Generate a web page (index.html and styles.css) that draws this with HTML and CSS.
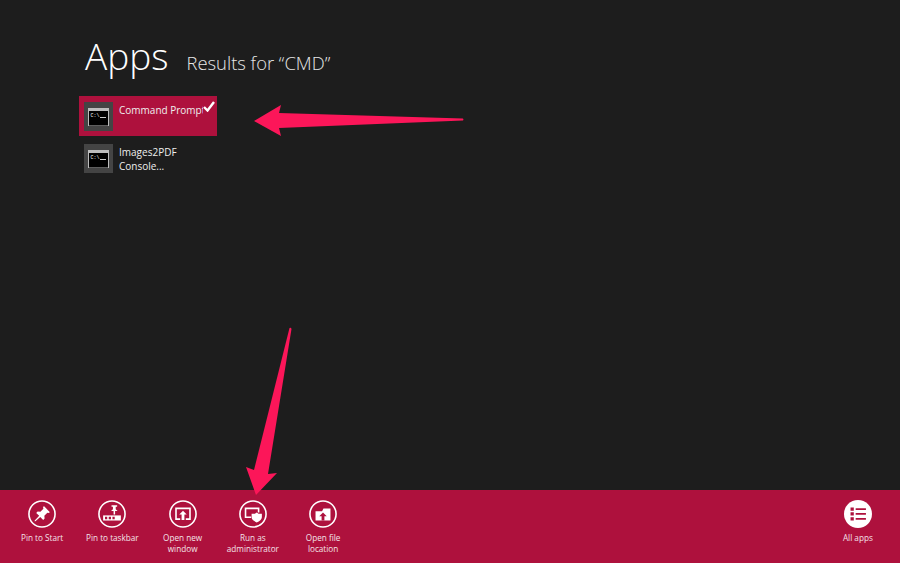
FILE: index.html
```html
<!DOCTYPE html>
<html lang="en">
<head>
<meta charset="utf-8">
<title>Apps</title>
<link rel="stylesheet" href="styles.css">
</head>
<body>
<div class="screen">
  <main class="results">
    <header class="heading">
      <h1 class="title">Apps</h1>
      <p class="subtitle">Results for “CMD”</p>
    </header>
    <ul class="app-list">
      <li class="app app-selected">
        <span class="app-icon"><svg class="term" viewBox="0 0 21 18"><rect width="21" height="18" fill="#bdbdbd"/><rect x="1" y="3" width="19" height="14.500" fill="#000"/><text x="2.500" y="9" class="term-text">C:\</text><rect x="12" y="9" width="6" height="1" fill="#ccc"/></svg></span>
        <span class="app-name">Command Prompt</span>
        <svg class="check" viewBox="0 0 12 11"><path d="M1 6l3.500 3.500L11 1" fill="none" stroke="#fff" stroke-width="2.400"/></svg>
      </li>
      <li class="app">
        <span class="app-icon"><svg class="term" viewBox="0 0 21 18"><rect width="21" height="18" fill="#bdbdbd"/><rect x="1" y="3" width="19" height="14.500" fill="#000"/><text x="2.500" y="9" class="term-text">C:\</text><rect x="12" y="9" width="6" height="1" fill="#ccc"/></svg></span>
        <span class="app-name">Images2PDF<br>Console...</span>
      </li>
    </ul>
  </main>
  <footer class="appbar">
    <div class="commands">
      <div class="cmd">
        <svg class="cmd-icon" viewBox="0 0 30 30"><circle cx="15" cy="15" r="14" fill="none" stroke="#fff" stroke-width="1.700"/><path d="M17 6.500l6.500 6.500-1.500 1-1.300-.4-3.200 3.200.3 3-1.500 1.500-3.200-3.200-5.100 4.700-1 .1.200-1 4.800-4.900-3.200-3.200 1.500-1.500 3 .3 3.200-3.200-.4-1.300z" fill="#fff"/></svg>
        <span class="cmd-label">Pin to Start</span>
      </div>
      <div class="cmd">
        <svg class="cmd-icon" viewBox="0 0 30 30"><circle cx="15" cy="15" r="14" fill="none" stroke="#fff" stroke-width="1.700"/><path d="M14.500 5.500h6v1.700h-1.500v2.600l2 2h-2.700v3.700h-1.600v-3.700h-2.700l2-2V7.200h-1.500z" fill="#fff"/><path d="M5.500 16.500h19v5.500h-19z" fill="#fff"/><path d="M7.500 18h2.400v2.500H7.500zM11.500 18h2.400v2.500h-2.400zM15.500 18h2.400v2.500h-2.400z" fill="#ae113d"/></svg>
        <span class="cmd-label">Pin to taskbar</span>
      </div>
      <div class="cmd">
        <svg class="cmd-icon" viewBox="0 0 30 30"><circle cx="15" cy="15" r="14" fill="none" stroke="#fff" stroke-width="1.700"/><path d="M18 20.500h4.500V9h-15v11.500H12" fill="none" stroke="#fff" stroke-width="1.700"/><path d="M15 11.500l4 4h-2.500v6h-3v-6H11z" fill="#fff"/></svg>
        <span class="cmd-label">Open new<br>window</span>
      </div>
      <div class="cmd">
        <svg class="cmd-icon" viewBox="0 0 30 30"><circle cx="15" cy="15" r="14" fill="none" stroke="#fff" stroke-width="1.700"/><path d="M13 18.500H7V9h14v4.500" fill="none" stroke="#fff" stroke-width="1.700"/><path d="M19 13.500l2 1.300h3.500v3.700c0 2.500-2.500 4.200-5.500 5.500-3-1.300-5.500-3-5.500-5.500v-3.700H17z" fill="#fff"/></svg>
        <span class="cmd-label">Run as<br>administrator</span>
      </div>
      <div class="cmd">
        <svg class="cmd-icon" viewBox="0 0 30 30"><circle cx="15" cy="15" r="14" fill="none" stroke="#fff" stroke-width="1.700"/><path d="M7 12h7l1.500-3H23v13H7z" fill="#fff"/><path d="M15 13.500l-4 4h2.500V22h3v-4.500H19z" fill="#ae113d"/></svg>
        <span class="cmd-label">Open file<br>location</span>
      </div>
    </div>
    <div class="cmd">
      <svg class="cmd-icon" viewBox="0 0 30 30"><circle cx="15" cy="15" r="15" fill="#fff"/><path d="M7 8h3.500v3.500H7zM7 13.200h3.500v3.500H7zM7 18.500h3.500V22H7z" fill="#ae113d"/><path d="M12.500 8.800h11v1.900h-11zM12.500 14h11v1.900h-11zM12.500 19.300h11v1.900h-11z" fill="#ae113d"/></svg>
      <span class="cmd-label">All apps</span>
    </div>
  </footer>
  <svg class="arrows" viewBox="0 0 900 563">
    <path d="M254 121L281 105L279 113L463 118.500Q464 120 463 120.500L279 128L281 136Z" fill="#fc1659"/>
    <path d="M256 495L246 467L254 470L289.500 328Q291 327 291.500 329L268 474L277 473Z" fill="#fc1659"/>
  </svg>
</div>
</body>
</html>
```
FILE: styles.css
```css
* { box-sizing: border-box; }
html, body { margin: 0; padding: 0; }
body { background: #1d1d1d; color: #fff; font-family: "Open Sans", "Noto Sans", sans-serif; }
.screen { position: relative; width: 900px; height: 563px; display: flex; flex-direction: column; overflow: hidden; }
.results { flex: 1; padding: 31px 0 0 79px; }
.heading { display: flex; align-items: baseline; padding-left: 6px; height: 65px; }
.title { margin: 0; font-size: 37px; font-weight: 300; line-height: 50px; }
.subtitle { margin: 0 0 0 18px; font-size: 18.400px; font-weight: 300; color: #e6e6e6; }
.app-list { list-style: none; margin: 0; padding: 0; display: flex; flex-direction: column; gap: 8px; width: 138px; }
.app { display: flex; align-items: flex-start; height: 30px; padding-left: 5px; position: relative; }
.app-selected { height: 40px; padding-top: 6px; background: #ae113d; }
.app-icon { flex: none; width: 29px; height: 29px; background: #444; display: flex; align-items: center; justify-content: center; }
.term { width: 21px; height: 18px; display: block; }
.term-text { font-size: 5px; fill: #fff; font-family: "Liberation Mono", monospace; }
.app-name { margin-left: 6px; padding-top: 1px; font-size: 10px; line-height: 14px; color: #eee; white-space: nowrap; overflow: hidden; width: 84px; }
.check { position: absolute; top: 5px; left: 124px; width: 12px; height: 11px; }
.appbar { flex: none; height: 73px; background: #ae113d; display: flex; justify-content: space-between; padding: 10px 7px 0 7px; }
.commands { display: flex; }
.cmd { width: 70.250px; display: flex; flex-direction: column; align-items: center; }
.cmd-icon { width: 28px; height: 28px; display: block; margin-bottom: 4px; }
.cmd-label { font-size: 8.200px; line-height: 11px; text-align: center; color: #f3e3e8; white-space: nowrap; }
.arrows { position: absolute; inset: 0; width: 900px; height: 563px; pointer-events: none; }
```
